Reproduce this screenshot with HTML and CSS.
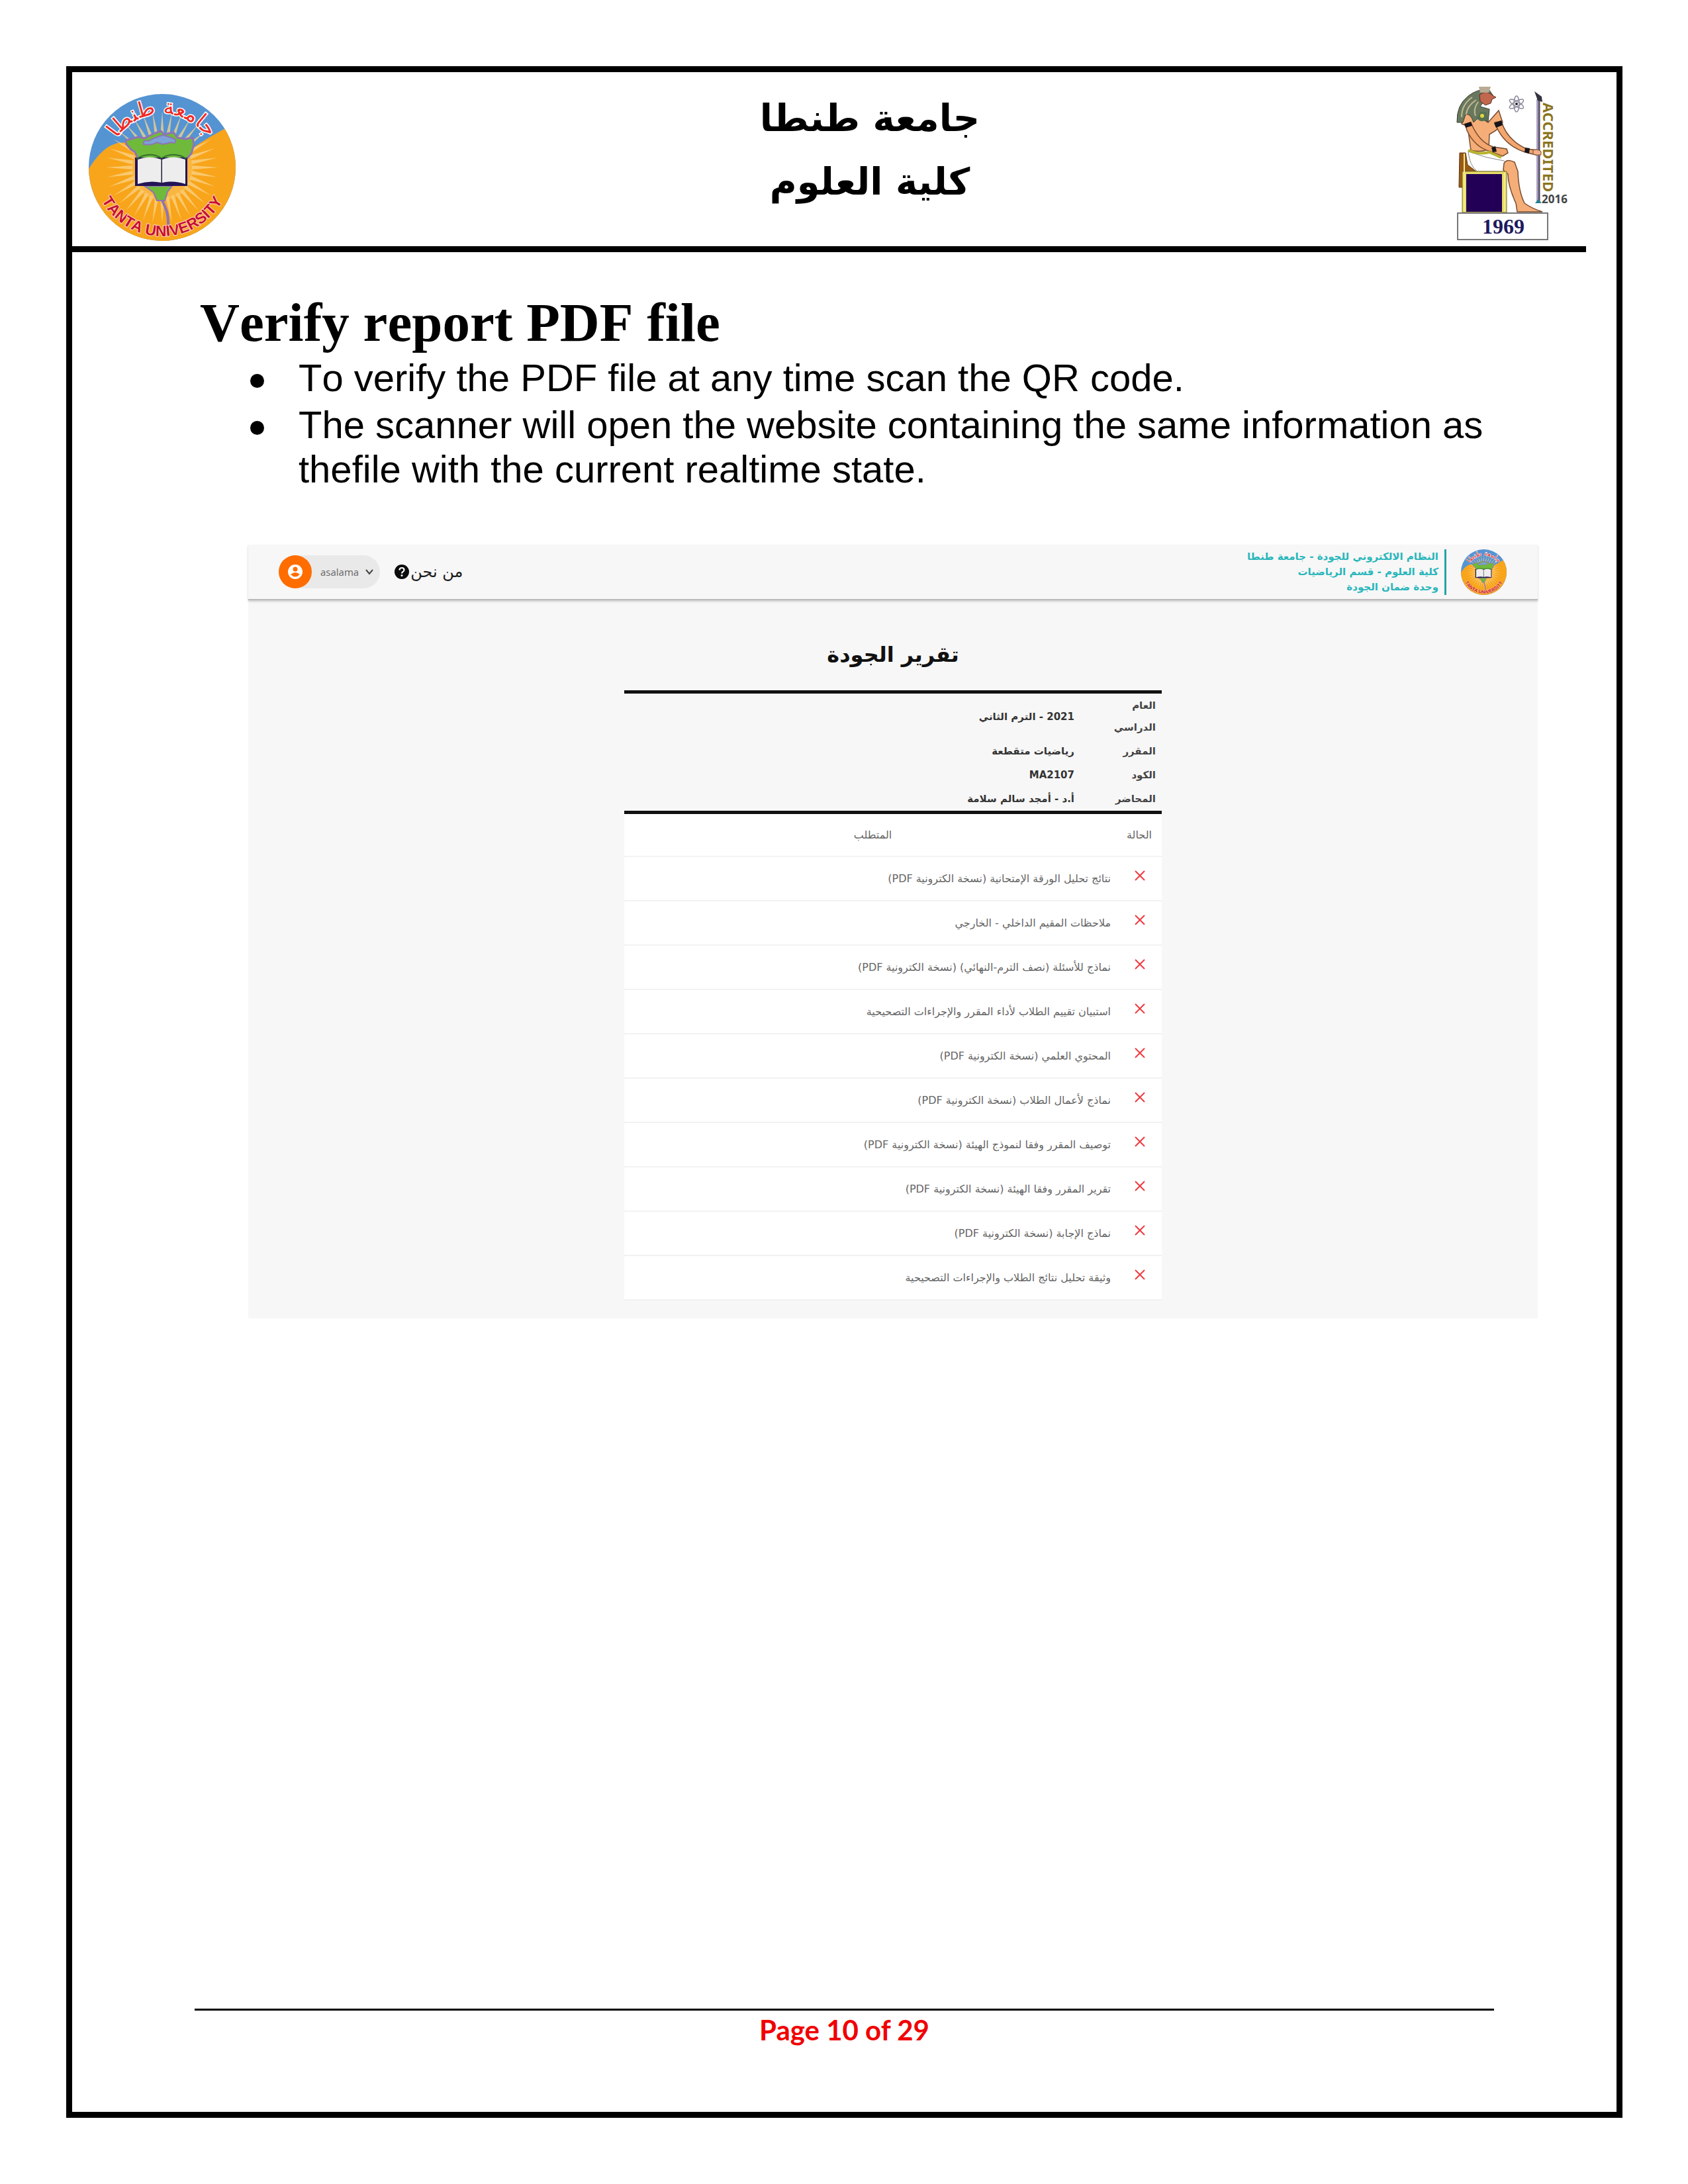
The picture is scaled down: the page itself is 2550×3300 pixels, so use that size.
FILE: index.html
```html
<!DOCTYPE html>
<html lang="en">
<head>
<meta charset="utf-8">
<meta name="viewport" content="width=device-width, initial-scale=1">
<title>Verify report PDF file</title>
<link rel="stylesheet" href="styles.css">
</head>
<body>
<svg class="sprite" aria-hidden="true">
  <defs>
    <clipPath id="disc"><circle cx="111" cy="111" r="111"/></clipPath>
    <path id="ray" d="M108 66 L111 26 L114 66Z"/>
    <g id="rays3"><use href="#ray"/><use href="#ray" transform="rotate(10 111 111)"/><use href="#ray" transform="rotate(20 111 111)"/></g>
    <g id="rays9"><use href="#rays3"/><use href="#rays3" transform="rotate(30 111 111)"/><use href="#rays3" transform="rotate(60 111 111)"/></g>
    <path id="arc-top" d="M30 111 A81 81 0 0 1 192 111"/>
    <path id="arc-bottom" d="M7 111 A104 104 0 0 0 215 111"/>
    <symbol id="cross" viewBox="0 0 16 16"><path d="M1 1 L15 15 M15 1 L1 15"/></symbol>
    <symbol id="seal" viewBox="0 0 222 222">
      <g clip-path="url(#disc)">
        <rect width="222" height="222" fill="#5594d2"/>
        <path d="M0 113 C14 92 26 78 45 74 L60 73 L158 82 C172 70 186 64 206 52 L240 60 V240 H-10Z" fill="#f8a51b"/>
      </g>
      <g fill="#fbd489" opacity=".75">
        <use href="#rays9"/><use href="#rays9" transform="rotate(90 111 111)"/><use href="#rays9" transform="rotate(180 111 111)"/><use href="#rays9" transform="rotate(270 111 111)"/>
      </g>
      <circle cx="111" cy="115" r="46" fill="#fbc766" opacity=".5"/>
      <path d="M56 70 L75 65 L84 67 L98 60 L109 56 L114 61 L128 58 L134 66 L146 68 L157 66 L159 76 L155 90 L147 99 H75 L70 88 L64 84 L57 76Z" fill="#6fba3a" stroke="#8f74b5" stroke-width="3" stroke-linejoin="round"/>
      <path d="M83 76 Q81 69 91 71 L98 67 L112 62 L122 65 L131 69 Q132 76 125 73 L112 76 L103 73 Q96 78 83 76Z" fill="#7da3d8" stroke="#8f74b5" stroke-width="2"/>
      <path d="M84 139 H126 L119 148 L115 161 L103 161 L98 149 L90 143Z" fill="#6fba3a" stroke="#8f74b5" stroke-width="2"/>
      <path d="M111 161 C116 172 121 180 120 200" fill="none" stroke="#8f74b5" stroke-width="4"/>
      <path d="M70 96 H149 V139 H70Z" fill="#241456"/>
      <path d="M74 99 Q92 92 110 99 V134 Q92 130 74 136Z M111 99 Q129 92 146 99 V136 Q129 130 111 134Z" fill="#ededed"/>
      <path d="M72 98 Q92 86 110 97 Q129 86 148 98" fill="none" stroke="#35702f" stroke-width="2"/>
      <path d="M110 97 V135" stroke="#222" stroke-width="1"/>
      <text class="seal-latin" text-anchor="middle"><textPath href="#arc-bottom" startOffset="50%">TANTA UNIVERSITY</textPath></text>
      <text class="seal-arabic" text-anchor="middle"><textPath href="#arc-top" startOffset="50%">جامعة طنطا</textPath></text>
    </symbol>
  </defs>
</svg>

<div class="sheet">
  <header class="letterhead">
    <svg class="seal-large" role="img" aria-label="Tanta University"><use href="#seal"/></svg>
    <div class="letterhead-title" lang="ar" dir="rtl">
      <p>جامعة طنطا</p>
      <p>كلية العلوم</p>
    </div>
    <svg class="faculty-emblem" viewBox="0 0 172 232" role="img" aria-label="Faculty of Science, accredited 2016">
      <path d="M5 100 H14 L17 118 L30 128 H10 V152 H4Z" fill="#9a5a14" stroke="#5c3510"/>
      <path d="M18 98 Q45 108 72 112 L84 128 H32 Q20 120 18 98Z" fill="#fff" stroke="#888"/>
      <path d="M10 44 L20 36 L48 54 L64 36 L70 54 L60 66 L50 72 L49 94 Q38 100 22 96 L17 60 L8 56Z" fill="#f6ae78" stroke="#774c31" stroke-width="1.5"/>
      <path d="M14 58 L22 54 Q34 84 56 91 L76 94 L78 100 L70 105 L52 98 Q28 92 16 66Z" fill="#f3a66d" stroke="#774c31" stroke-width="1.5"/>
      <path d="M58 54 L68 52 Q76 80 106 94 L124 96 L124 104 L104 99 Q70 88 58 54Z" fill="#f3a66d" stroke="#774c31" stroke-width="1.5"/>
      <path d="M12 56 l10 -3 2 6 -10 3Z M57 55 l11 -4 2 7 -10 4Z M53 92 l6 -2 2 8 -6 1Z M104 92 l7 1 -1 8 -7 -2Z" fill="#16141c"/>
      <path d="M1 54 Q0 28 18 14 Q32 3 49 4 L56 14 L44 19 L36 30 L50 34 L48 53 L34 46 L26 54 Q22 40 14 42 L10 54Z" fill="#68785f" stroke="#37402f"/>
      <path d="M8 46 Q8 27 24 16 M15 42 Q16 29 30 20 M29 44 Q25 34 33 23" stroke="#c7b98e" stroke-width="2" fill="none"/>
      <path d="M35 12 Q46 4 56 14 L60 16 L54 19 L52 25 L44 28 L36 22Z" fill="#c0674d" stroke="#573024"/>
      <path d="M34 0 H52 L49 9 H36Z" fill="#b8aa94"/>
      <path d="M31 48 Q38 56 48 49 L45 38 H36Z" fill="#567052"/><circle cx="39" cy="44" r="3" fill="#e4d43c"/>
      <path d="M18 96 Q34 103 50 99 L68 107" stroke="#b9b32d" stroke-width="4" fill="none"/>
      <path d="M72 116 Q76 108 88 114 L93 128 Q94 158 103 176 Q114 184 130 189 H92 L90 176 Q78 150 78 132 L71 126Z" fill="#f6ae78" stroke="#774c31" stroke-width="1.5"/>
      <path d="M9 128 H76 V190 H9Z" fill="#e7dc68" stroke="#77702e"/>
      <path d="M15 132 H69 V189 H15Z" fill="#210056"/>
      <path d="M12 101 V189 M73 130 V189" stroke="#f3eb8e" stroke-width="2"/>
      <path d="M124 19 V176" stroke="#55525e" stroke-width="5"/><path d="M123 20 V175" stroke="#a694c8" stroke-width="2"/>
      <path d="M118 7 L129 15 L130 23 L123 21Z" fill="#343440"/><path d="M119 176 L124 170 L129 176Z" fill="#217f93"/>
      <path d="M116 96 q6 -3 12 2 v5 q-7 1 -12 -1Z" fill="#f3b08a" stroke="#774c31"/>
      <g fill="none" stroke="#8a8a9b" stroke-width="1.5"><ellipse cx="91" cy="26" rx="4" ry="12"/><ellipse cx="91" cy="26" rx="4" ry="12" transform="rotate(60 91 26)"/><ellipse cx="91" cy="26" rx="4" ry="12" transform="rotate(120 91 26)"/></g>
      <circle cx="91" cy="26" r="2" fill="#222"/>
      <text class="emblem-accredited" transform="translate(131 24) rotate(90)">ACCREDITED</text>
      <text class="emblem-since" x="129" y="176">2016</text>
      <path d="M2 191 H138 V231 H2Z" fill="#fff" stroke="#777" stroke-width="2"/>
      <text class="emblem-year" x="71" y="222" text-anchor="middle">1969</text>
    </svg>
  </header>

  <main class="content">
    <h1>Verify report PDF file</h1>
    <ul class="steps">
      <li><span>To verify the PDF file at any time scan the QR code.</span></li>
      <li><span>The scanner will open the website containing the same information as thefile with the current realtime state.</span></li>
    </ul>

    <section class="app" lang="ar" dir="rtl">
      <header class="app-bar">
        <div class="brand">
          <svg class="seal-small" aria-hidden="true"><use href="#seal"/></svg>
          <div class="brand-text">
            <p>النظام الالكتروني للجودة - جامعة طنطا</p>
            <p>كلية العلوم - قسم الرياضيات</p>
            <p>وحدة ضمان الجودة</p>
          </div>
        </div>
        <nav class="app-nav">
          <a class="about" href="#about">من نحن
            <svg class="about-icon" viewBox="0 0 22 22" aria-hidden="true"><circle cx="11" cy="11" r="11" fill="#0c0c0c"/><path d="M7.500 8.500 Q7.500 5 11 5 Q14.500 5 14.500 8 Q14.500 10 12.500 11 Q11 12 11 13.500" fill="none" stroke="#fff" stroke-width="2.200"/><circle cx="11" cy="16.500" r="1.500" fill="#fff"/></svg>
          </a>
          <button class="account" type="button" dir="ltr">
            <svg class="avatar" viewBox="0 0 50 50" aria-hidden="true"><circle cx="25" cy="25" r="25" fill="#ff6d00"/><circle cx="25" cy="25" r="11" fill="#fff"/><circle cx="25" cy="21" r="3.500" fill="#ff6d00"/><path d="M18 29 Q25 23 32 29 Q25 36 18 29Z" fill="#ff6d00"/></svg>
            <span>asalama</span>
            <svg class="chevron" viewBox="0 0 14 14" aria-hidden="true"><path d="M2 4 L7 10 L12 4" fill="none" stroke="#444" stroke-width="2"/></svg>
          </button>
        </nav>
      </header>

      <div class="report">
        <h2>تقرير الجودة</h2>
        <table class="facts">
          <tr><th scope="row">العام الدراسي</th><td>2021 - الترم الثاني</td></tr>
          <tr><th scope="row">المقرر</th><td>رياضيات متقطعة</td></tr>
          <tr><th scope="row">الكود</th><td>MA2107</td></tr>
          <tr><th scope="row">المحاضر</th><td>أ.د - أمجد سالم سلامة</td></tr>
        </table>
        <table class="requirements">
          <thead><tr><th scope="col">الحالة</th><th scope="col">المتطلب</th></tr></thead>
          <tbody>
            <tr><td><svg class="cross" role="img" aria-label="غير مكتمل"><use href="#cross"/></svg></td><td>نتائج تحليل الورقة الإمتحانية (نسخة الكترونية PDF)</td></tr>
            <tr><td><svg class="cross" role="img" aria-label="غير مكتمل"><use href="#cross"/></svg></td><td>ملاحظات المقيم الداخلي - الخارجي</td></tr>
            <tr><td><svg class="cross" role="img" aria-label="غير مكتمل"><use href="#cross"/></svg></td><td>نماذج للأسئلة (نصف الترم-النهائي) (نسخة الكترونية PDF)</td></tr>
            <tr><td><svg class="cross" role="img" aria-label="غير مكتمل"><use href="#cross"/></svg></td><td>استبيان تقييم الطلاب لأداء المقرر والإجراءات التصحيحية</td></tr>
            <tr><td><svg class="cross" role="img" aria-label="غير مكتمل"><use href="#cross"/></svg></td><td>المحتوي العلمي (نسخة الكترونية PDF)</td></tr>
            <tr><td><svg class="cross" role="img" aria-label="غير مكتمل"><use href="#cross"/></svg></td><td>نماذج لأعمال الطلاب (نسخة الكترونية PDF)</td></tr>
            <tr><td><svg class="cross" role="img" aria-label="غير مكتمل"><use href="#cross"/></svg></td><td>توصيف المقرر وفقا لنموذج الهيئة (نسخة الكترونية PDF)</td></tr>
            <tr><td><svg class="cross" role="img" aria-label="غير مكتمل"><use href="#cross"/></svg></td><td>تقرير المقرر وفقا الهيئة (نسخة الكترونية PDF)</td></tr>
            <tr><td><svg class="cross" role="img" aria-label="غير مكتمل"><use href="#cross"/></svg></td><td>نماذج الإجابة (نسخة الكترونية PDF)</td></tr>
            <tr><td><svg class="cross" role="img" aria-label="غير مكتمل"><use href="#cross"/></svg></td><td>وثيقة تحليل نتائج الطلاب والإجراءات التصحيحية</td></tr>
          </tbody>
        </table>
      </div>
    </section>
  </main>

  <footer class="page-footer">Page 10 of 29</footer>
</div>
</body>
</html>
```
FILE: styles.css
```css
* { box-sizing: border-box; }

body {
  margin: 0;
  padding: 100px 99px 100px 100px;
  min-height: 100vh;
  display: flex;
  background: #fff;
  color: #000;
  font-family: "Liberation Sans", Arial, sans-serif;
}

h1, h2, p, ul { margin: 0; padding: 0; }

.sprite { position: absolute; width: 0; height: 0; }

.sheet {
  flex: 1;
  display: flex;
  flex-direction: column;
  border: 9px solid #000;
}

/* Letterhead */
.letterhead {
  display: flex;
  align-items: flex-start;
  margin-right: 46px;
  padding: 22px 24px 8px 25px;
  border-bottom: 9px solid #000;
}
.seal-large { width: 222px; height: 222px; margin-top: 11px; }
.faculty-emblem { width: 172px; height: 232px; }
.letterhead-title {
  flex: 1;
  padding-left: 72px;
  text-align: center;
  font: bold 56px/96px "DejaVu Sans", sans-serif;
}

.seal-latin { font: bold 23px "Liberation Sans", sans-serif; font-kerning: none; fill: #c8102e; stroke: #fbd0c0; stroke-width: 2px; paint-order: stroke; }
.seal-arabic { font: 32px "DejaVu Sans", sans-serif; fill: #ee2a24; stroke: #fff; stroke-width: 3px; paint-order: stroke; }
.emblem-accredited { font: bold 22px "Noto Sans", sans-serif; fill: #8b7420; }
.emblem-since { font: bold 17px "Noto Sans", sans-serif; fill: #444; }
.emblem-year { font: bold 32px "Liberation Serif", serif; fill: #1d1a5e; }

/* Body text */
.content { padding: 58px 119px 80px 193px; }
h1 { font: bold 83px/96px "Liberation Serif", serif; font-kerning: none; }
.steps { display: grid; gap: 4px; margin-top: 2px; padding-left: 76px; list-style: none; font-size: 58px; line-height: 67px; font-kerning: none; }
.steps li { display: grid; grid-template-columns: 73px 1fr; }
.steps li::before { content: ""; width: 21px; height: 21px; margin-top: 28px; border-radius: 50%; background: #000; }

/* Report viewer */
.app {
  margin: 81px 0 0 73px;
  padding-bottom: 27px;
  background: #f7f7f7;
  color: #333;
  font-family: "DejaVu Sans", sans-serif;
}
.app-bar {
  display: flex;
  justify-content: space-between;
  align-items: center;
  height: 84px;
  padding: 0 47px 0 46px;
  border-bottom: 2px solid #bbb;
  box-shadow: 0 2px 3px #ccc;
}
.brand { display: flex; align-items: center; gap: 22px; }
.seal-small { width: 69px; height: 69px; }
.brand-text { border-right: 3px solid #26a5a5; padding-right: 9px; color: #28b6bb; font-weight: bold; font-size: 15px; line-height: 23px; }
.app-nav { display: flex; align-items: center; gap: 22px; }
.about { display: flex; align-items: center; gap: 2px; color: #1c1c1c; font-size: 24px; text-decoration: none; }
.about-icon { width: 22px; height: 22px; }
.account {
  display: flex;
  align-items: center;
  height: 50px;
  padding: 0 9px 0 0;
  border: 0;
  border-radius: 25px;
  background: #e9e9e9;
  color: #666;
  font: 15px "Open Sans", sans-serif;
}
.account span { margin: 0 9px 0 13px; }
.avatar { width: 50px; height: 50px; }
.chevron { width: 14px; height: 14px; }

.report { width: 812px; max-width: 100%; margin: 0 auto; }
.report h2 { padding: 62px 0 34px; color: #111; text-align: center; font-size: 32px; line-height: 40px; }
.report table { width: 100%; border-collapse: collapse; table-layout: fixed; text-align: right; }
.facts { border-top: 5px solid #111; border-bottom: 5px solid #111; font-size: 15px; line-height: 33px; font-weight: bold; }
.facts th, .facts td { padding: 2px 0 1px; }
.facts th { width: 132px; padding-right: 9px; padding-left: 30px; color: #444; }
.requirements { background: #fff; color: #666; font-size: 16px; line-height: 25px; }
.requirements th, .requirements td { height: 67px; padding: 0; border-bottom: 2px solid #f2f2f2; font-weight: normal; }
.requirements thead th { height: 64px; }
.requirements th:first-child { width: 77px; padding-right: 15px; }
.requirements th:last-child { padding-left: 16px; text-align: center; }
.requirements td:first-child { padding-right: 25px; }
.cross { display: block; width: 16px; height: 16px; margin-bottom: 10px; fill: none; stroke: #f03a40; stroke-width: 2px; }

/* Page number */
.page-footer {
  margin: auto 185px 95px 185px;
  border-top: 3px solid #000;
  color: #f00000;
  text-align: center;
  font: bold 42px/58px Lato, sans-serif;
}
```
